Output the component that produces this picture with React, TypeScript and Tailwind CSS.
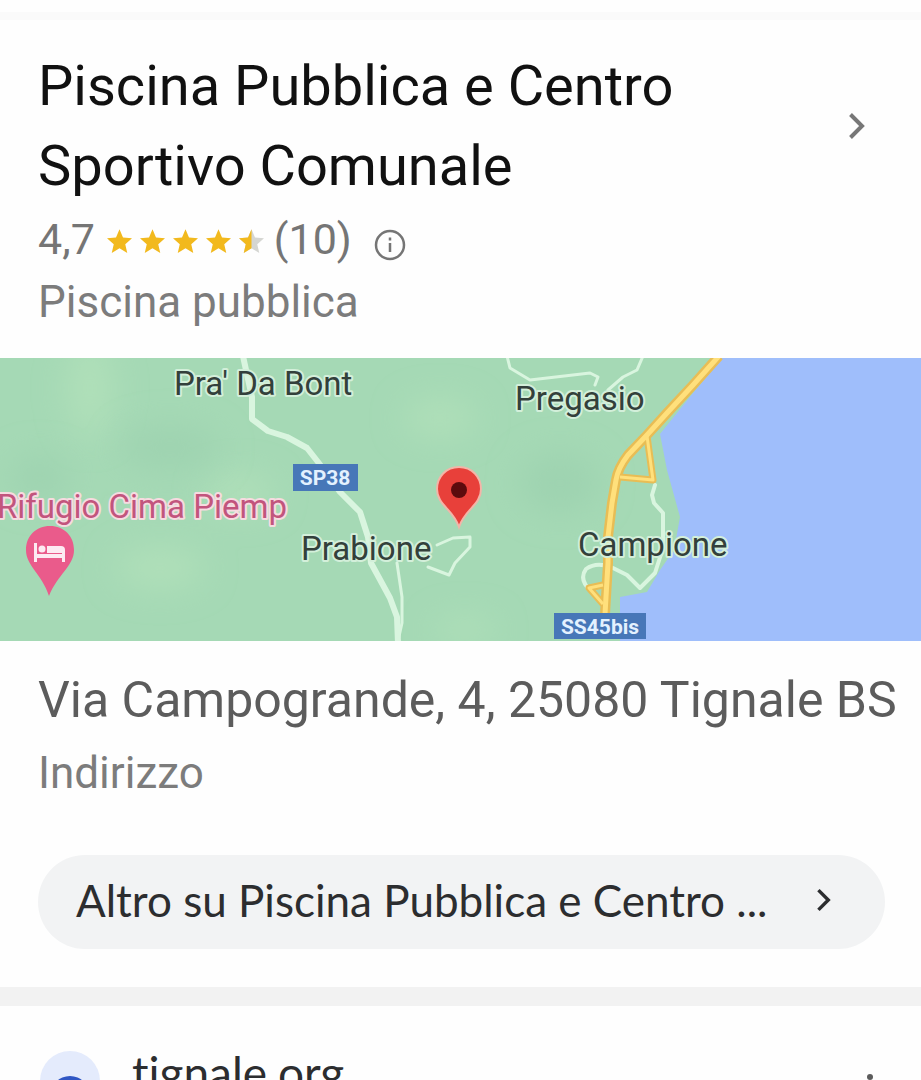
import React from "react";

const STAR = "M12 17.3 18.2 21l-1.6-7L22 9.2l-7.2-.6L12 2 9.2 8.600 2 9.200 7.400 14 5.800 21z";

function Star({ half = false }: { half?: boolean }) {
  return (
    <svg viewBox="2 2 20 19" className="h-6 w-[25px]" aria-hidden="true">
      <path d={STAR} fill={half ? "#d5d6d2" : "#f2b91d"} />
      {half && <path d="M12 17.300V2L9.200 8.600 2 9.200 7.400 14 5.800 21z" fill="#f2b91d" />}
    </svg>
  );
}

function Chevron({ className }: { className: string }) {
  return (
    <svg viewBox="0 0 18 28" className={className} fill="none" stroke="currentColor" strokeWidth="4" aria-hidden="true">
      <path d="M2.500 2.500 14 14 2.500 25.500" />
    </svg>
  );
}

function InfoIcon() {
  return (
    <svg viewBox="0 0 32 32" className="size-8" fill="none" stroke="#757575" strokeWidth="2.500" aria-hidden="true">
      <circle cx="16" cy="16" r="14" />
      <path d="M16 14v9M16 8.500v3" />
    </svg>
  );
}

function MapLabel({ x, y, color = "#33403b", halo = "#d3efda", children }: {
  x: number; y: number; color?: string; halo?: string; children: string;
}) {
  return (
    <text x={x} y={y} fill={color} stroke={halo} strokeWidth="4" strokeLinejoin="round" paintOrder="stroke" fontSize="33">
      {children}
    </text>
  );
}

function PlaceMap() {
  return (
    <svg viewBox="0 0 921 283" className="block h-auto w-full font-[Roboto,sans-serif]" role="img" aria-label="Mappa">
      <defs>
        <filter id="soft" x="-50%" y="-50%" width="200%" height="200%">
          <feGaussianBlur stdDeviation="16" />
        </filter>
      </defs>
      <rect width="921" height="283" fill="#a5d9b5" />
      <g filter="url(#soft)" fill="#b0e0b9">
        <ellipse cx="90" cy="30" rx="22" ry="50" />
        <ellipse cx="240" cy="135" rx="34" ry="18" />
        <ellipse cx="160" cy="210" rx="44" ry="20" />
        <ellipse cx="440" cy="60" rx="36" ry="18" />
        <ellipse cx="465" cy="272" rx="30" ry="12" />
      </g>
      <g filter="url(#soft)" fill="#9ed3b0">
        <ellipse cx="170" cy="90" rx="50" ry="22" />
        <ellipse cx="560" cy="125" rx="40" ry="30" />
        <ellipse cx="40" cy="120" rx="30" ry="22" />
      </g>
      <path d="M722 0 693 35 660 76 667 112 680 159 674 192 660 212 647 234 620 239V283H921V0z" fill="#9fbefb" />

      <g fill="none" stroke="#d9f5df" strokeLinejoin="round" strokeLinecap="round">
        <path d="M243 -2 246 12 252 39 252 61 268 73 287 79 307 90 318 104 340 134 360 154 368 179 371 205 390 240 397 259 398 285" strokeWidth="6" />
        <path d="M397 205 402 239 402 265 398 283" strokeWidth="3" />
        <path d="M437 187 453 180 470 179 470 189 455 205 449 217 428 209" strokeWidth="3" />
        <path d="M507 -2 510 10 530 22 590 15 598 19 595 27M608 32 623 19 637 12 643 -2" strokeWidth="3" />
        <path d="M655 127 652 137 654 145 663 155 663 190 655 215 640 230 627 217 613 210Q597 203 586 211 578 222 592 234" strokeWidth="4" />
      </g>
      <g fill="none" strokeLinejoin="round">
        <g stroke="#e8bd55" strokeWidth="10">
          <path d="M719 -2 693 27 667 55 647 77 628 97Q618 110 616 122L612 145 608 179V205L605 256" />
        </g>
        <g stroke="#e8bd55" strokeWidth="7">
          <path d="M647 78 653 122 620 119M603 227 589 230 603 246" />
        </g>
        <g stroke="#ffe07c" strokeWidth="5">
          <path d="M719 -2 693 27 667 55 647 77 628 97Q618 110 616 122L612 145 608 179V205L605 256" />
        </g>
        <g stroke="#ffe07c" strokeWidth="3">
          <path d="M647 78 653 122 620 119M603 227 589 230 603 246" />
        </g>
      </g>

      <MapLabel x={174} y={37}>Pra' Da Bont</MapLabel>
      <MapLabel x={515} y={52}>Pregasio</MapLabel>
      <MapLabel x={301} y={202}>Prabione</MapLabel>
      <MapLabel x={578} y={198}>Campione</MapLabel>
      <MapLabel x={-3} y={160} color="#c2557d" halo="#f6dbe0">Rifugio Cima Piemp</MapLabel>

      <g fontSize="21" fontWeight="700" fill="#e3f1ff" textAnchor="middle">
        <rect x="293" y="106" width="65" height="27" fill="#4777b8" />
        <text x="325" y="127">SP38</text>
        <rect x="554" y="255" width="92" height="26" fill="#4777b8" />
        <text x="600" y="276">SS45bis</text>
      </g>

      <path d="M459 109C446 109 437 119 437 131 437 147 453 151 459 169 465 151 481 147 481 131 481 119 472 109 459 109z" fill="#e8403a" stroke="#f3b5a8" strokeWidth="2" />
      <circle cx="459" cy="132" r="8" fill="#5c0b0d" />

      <path d="M50 168C36 168 26 178 26 192 26 208 42 216 49 238 58 216 74 208 74 192 74 178 64 168 50 168z" fill="#ea5b8b" />
      <g fill="#fdeaf2">
        <path d="M34 185h3v11h25v-2h3v10h-3v-4H37v4h-3z" />
        <circle cx="42" cy="191" r="3.500" />
        <path d="M47 188h14q4 0 4 4v3H47z" />
      </g>
    </svg>
  );
}

export default function App() {
  return (
    <div className="h-screen overflow-y-auto bg-[#fefefe] font-[Roboto,sans-serif] [scrollbar-width:none]">
      <div className="mt-3 h-2 bg-[#fafafa]" />

      <main>
        <header className="px-[38px] pt-[26px]">
          <a href="#scheda" className="flex items-center justify-between pr-[17px]">
            <h1 className="max-w-[680px] text-[56px] leading-[80px] text-[#111111]">
              Piscina Pubblica e Centro Sportivo Comunale
            </h1>
            <Chevron className="h-7 w-[18px] text-[#777777]" />
          </a>
          <div className="flex h-[66px] items-center text-[43px] leading-[66px] text-[#757575]">
            <span>4,7</span>
            <span className="mt-1 ml-3 flex gap-2" role="img" aria-label="4,7 stelle su 5">
              <Star />
              <Star />
              <Star />
              <Star />
              <Star half />
            </span>
            <span className="ml-[10px]">(10)</span>
            <button type="button" aria-label="Informazioni sulle recensioni" className="mt-3 ml-[22px]">
              <InfoIcon />
            </button>
          </div>
          <p className="text-[44px] leading-[60px] text-[#7c7c7c]">Piscina pubblica</p>
        </header>

        <div className="mt-[26px]">
          <PlaceMap />
        </div>

        <section className="px-[38px] pt-[21px]">
          <p className="text-[50px] leading-[76px] whitespace-nowrap text-[#5c5c5c]">Via Campogrande, 4, 25080 Tignale BS</p>
          <p className="text-[44px] leading-[70px] text-[#7c7c7c]">Indirizzo</p>
          <a
            href="#altro"
            className="mt-[47px] -mr-[2px] flex h-[94px] items-center justify-between rounded-full bg-[#f2f3f4] pr-[53px] pb-1 pl-[38px] text-[44px] text-[#2c2d2f]"
          >
            <span className="font-[Lato,sans-serif] whitespace-nowrap">Altro su Piscina Pubblica e Centro ...</span>
            <Chevron className="h-6 w-4" />
          </a>
        </section>
      </main>

      <div className="mt-[38px] h-[19px] bg-[#f2f2f2]" />

      <section className="flex h-[75px] items-start overflow-hidden px-[40px] pt-[45px]">
        <svg viewBox="0 0 60 60" className="size-[60px] shrink-0" aria-hidden="true">
          <circle cx="30" cy="30" r="30" fill="#e4ebfc" />
          <circle cx="30" cy="45" r="20" fill="#2f56c4" />
        </svg>
        <a href="#tignale" className="ml-8 font-[Lato,sans-serif] text-[46px] leading-[44px] text-[#2c2d2f] [font-variant-ligatures:none]">
          tignale.org
        </a>
        <button type="button" aria-label="Altre opzioni" className="mt-[22px] mr-[5px] ml-auto">
          <svg viewBox="0 0 12 40" className="h-10 w-3" fill="#5c5c5c" aria-hidden="true">
            <circle cx="6" cy="4" r="3" />
            <circle cx="6" cy="18" r="3" />
            <circle cx="6" cy="32" r="3" />
          </svg>
        </button>
      </section>
    </div>
  );
}
